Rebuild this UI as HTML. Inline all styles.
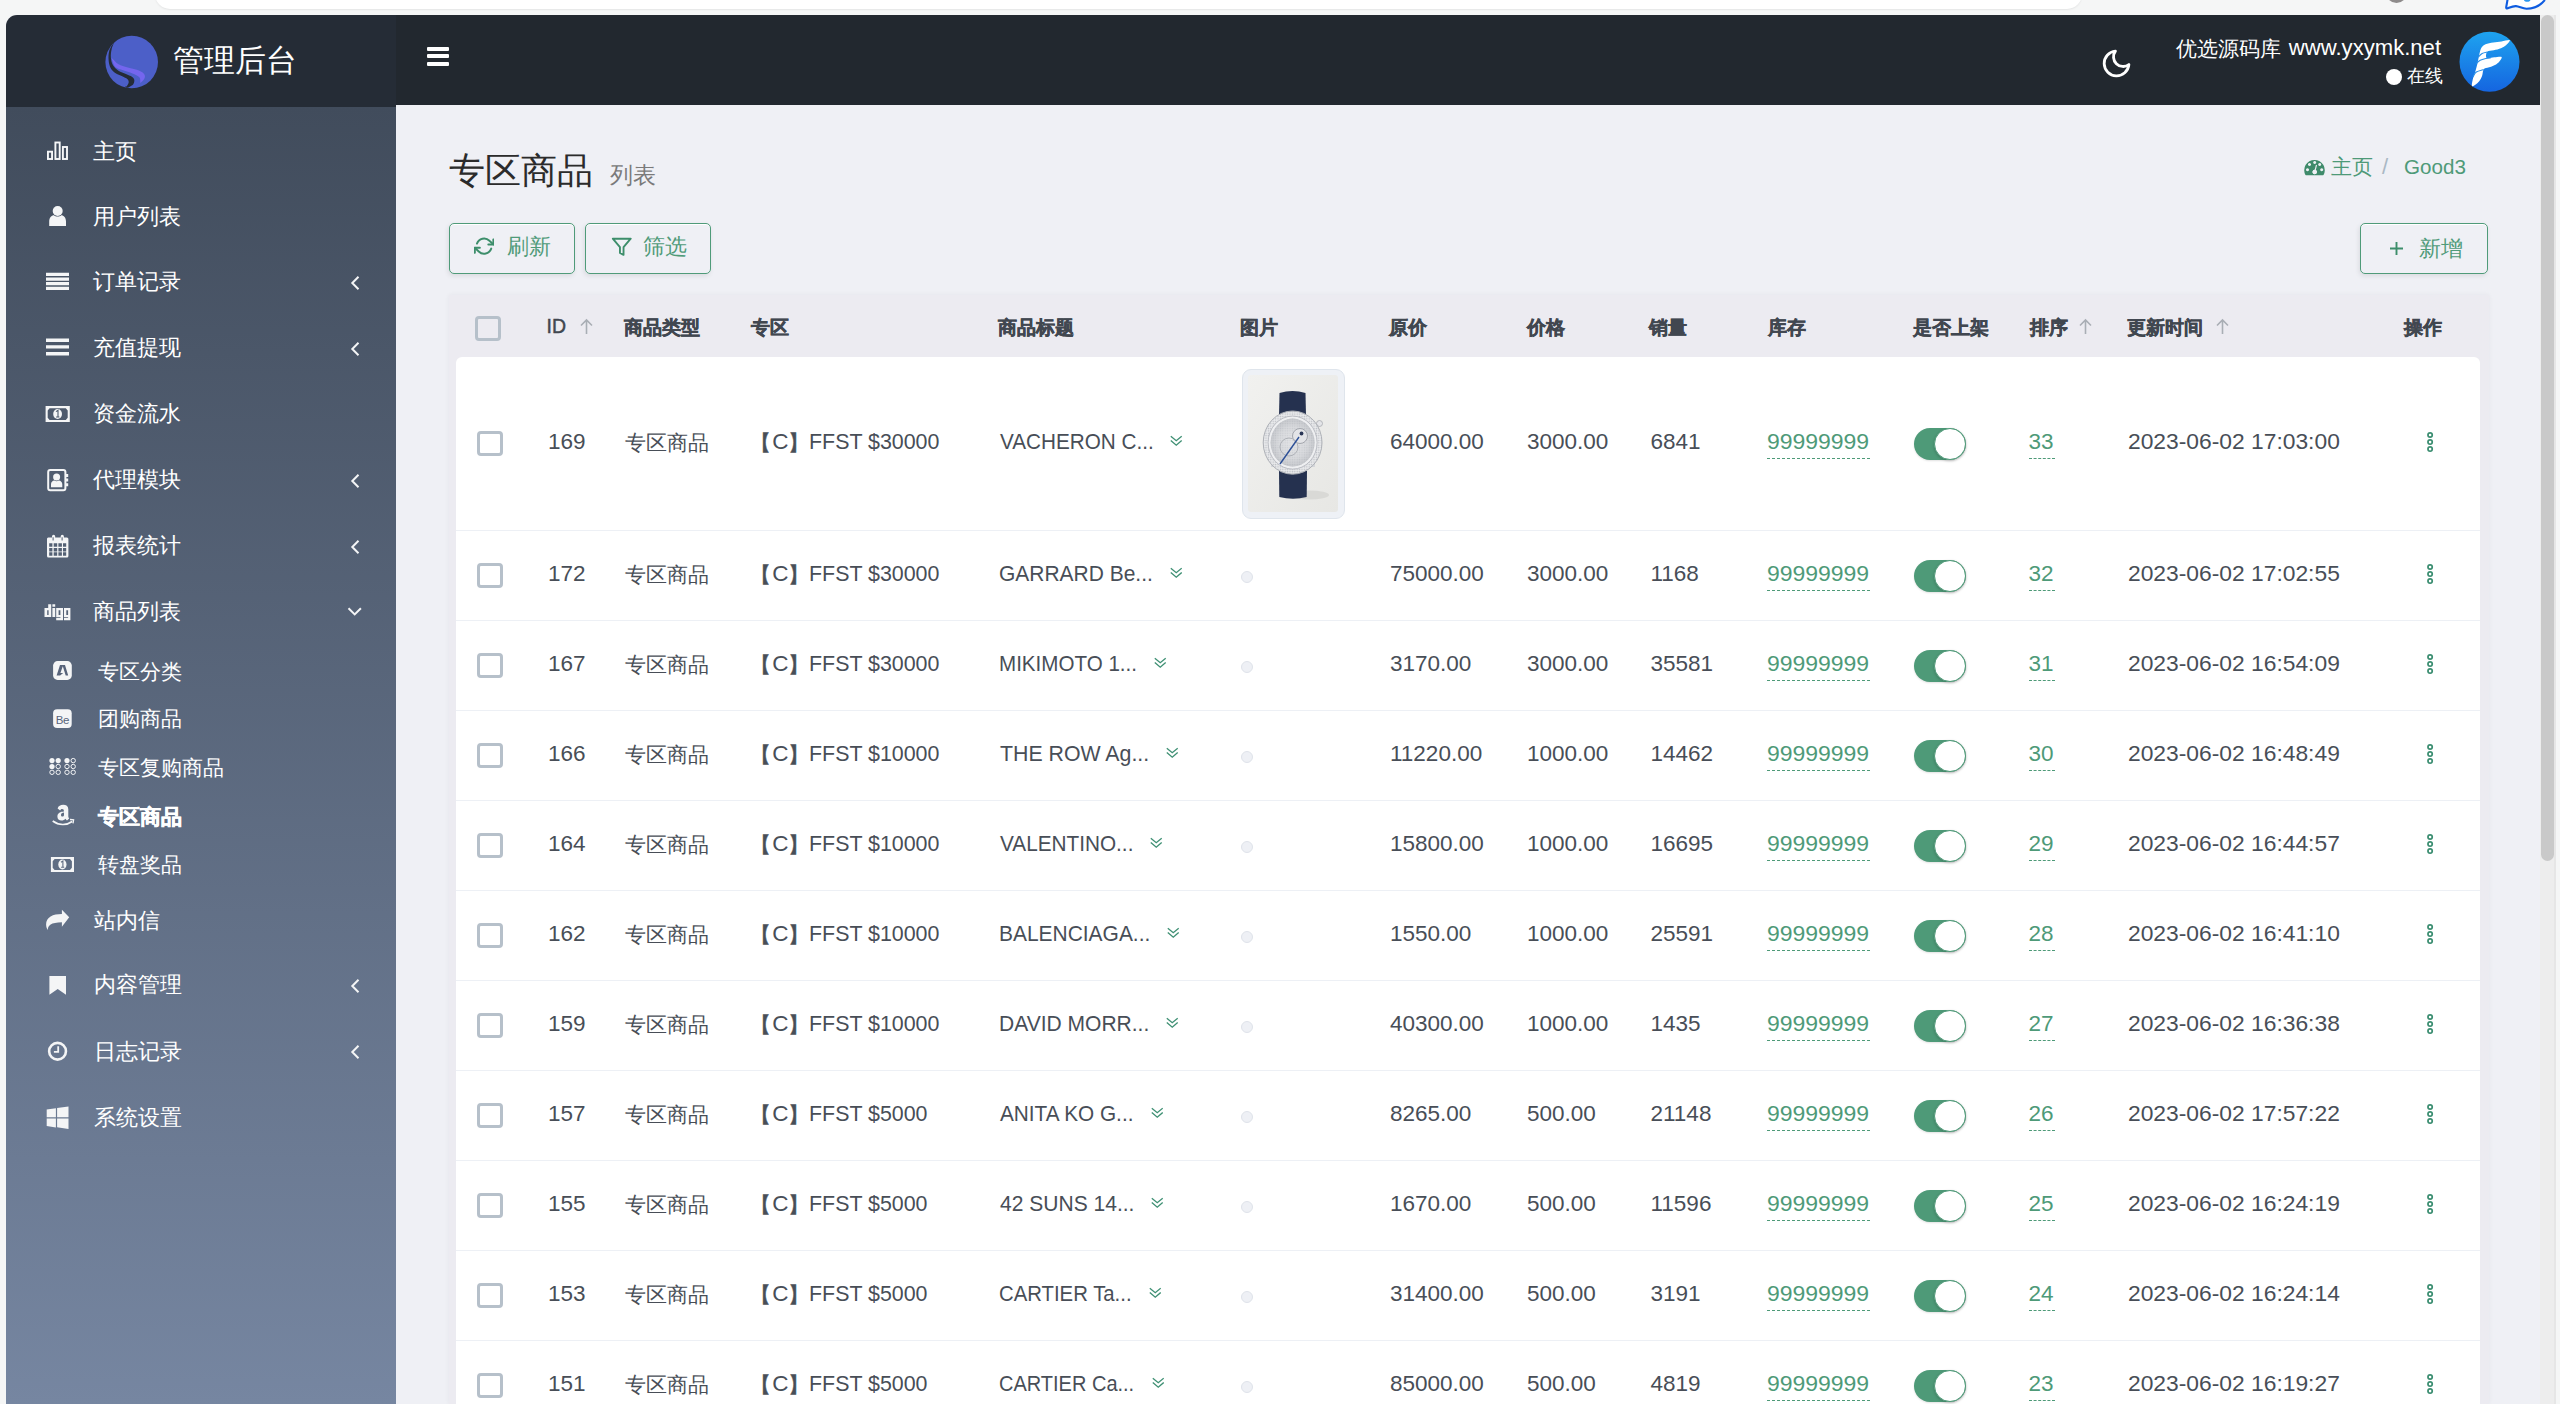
<!DOCTYPE html>
<html><head><meta charset="utf-8"><style>
*{margin:0;padding:0;box-sizing:border-box}
html,body{width:2560px;height:1404px;overflow:hidden}
body{background:#f5f6f6;font-family:"Liberation Sans",sans-serif;position:relative;color:#414750}
.abs{position:absolute}
#topbar{position:absolute;left:155px;top:-21px;width:1927px;height:30px;background:#fff;border-radius:15px;box-shadow:0 1px 2px rgba(0,0,0,.07)}
#greyc{position:absolute;left:2386px;top:-18px;width:21px;height:21px;border-radius:50%;background:#8e8b8b}
#app{position:absolute;left:6px;top:15px;width:2534px;height:1389px;border-top-left-radius:11px;overflow:hidden;background:#eff0f5}
#brand{position:absolute;left:0;top:0;width:390px;height:92px;background:#252c36}
#nav{position:absolute;left:390px;top:0;width:2144px;height:90px;background:#22282f}
#side{position:absolute;left:0;top:92px;width:390px;height:1297px;background:linear-gradient(#414c5c,#7686a1)}
#content{position:absolute;left:390px;top:90px;width:2144px;height:1299px;background:#eff0f5}
#scroll{position:absolute;left:2540px;top:15px;width:16px;height:1389px;background:#ededed;border-right:2px solid #e6e6e6}
#thumb{position:absolute;left:2541px;top:15px;width:13px;height:846px;border-radius:7px;background:#c9c9c9}
.logo{position:absolute;left:99px;top:21px;width:53px;height:53px;border-radius:50%;background:#4f5fc4;overflow:hidden}
.brandtxt{position:absolute;left:168px;top:46px;transform:translateY(-50%);color:#fff;font-size:31px;line-height:1;white-space:nowrap}
.hamb{position:absolute;left:421px;top:32px;width:22px}
.hamb i{display:block;height:4px;background:#fff;border-radius:1px;margin-bottom:3.3px}
.side-i{position:absolute;left:0;width:390px;height:40px;color:#fff}
.side-i .tx{position:absolute;left:87px;top:50%;transform:translateY(-50%);font-size:23px;line-height:1;white-space:nowrap}
.side-i.sub .tx{left:91px}
.side-i .ic{position:absolute;left:40px;top:50%;transform:translateY(-50%);width:24px;height:24px}
.side-i.sub .ic{left:44px}
.side-i .arr{position:absolute;left:345px;top:50%;transform:translateY(-50%);width:9px;height:14px}
.title{position:absolute;left:449px;top:170.5px;transform:translateY(-50%);font-size:36px;line-height:1;color:#2b2b2b;white-space:nowrap}
.subt{position:absolute;left:610px;top:175px;transform:translateY(-50%);font-size:23px;line-height:1;color:#7a7a7a;white-space:nowrap}
.btn{position:absolute;top:223px;height:51px;border:1.4px solid #4f9b79;border-radius:5px;color:#4f9b79;font-size:21.5px;box-shadow:-1px 2px 5px rgba(0,0,0,.09),inset 0 1px 0 #fff}
.btn .bt{position:absolute;top:50%;transform:translateY(-50%);line-height:1;white-space:nowrap}
.crumb{position:absolute;top:167px;transform:translateY(-50%);color:#4e9a78;font-size:22px;line-height:1;white-space:nowrap}
#thead{position:absolute;left:448.5px;top:294.6px;width:2040px;height:1109px;background:#ecebf1;box-shadow:0 0 5px rgba(40,40,60,.05)}
.th{position:absolute;top:327px;transform:translateY(-50%);font-size:19px;font-weight:bold;-webkit-text-stroke:0.45px #414750;line-height:1;color:#414750;white-space:nowrap}
.arrow{position:absolute;top:318px;width:13px;height:17px}
#tbody{position:absolute;left:456px;top:357px;width:2024px;height:1100px;background:#fff;border-radius:6px 6px 0 0}
.sep{position:absolute;left:456px;width:2024px;height:1px;background:#edf0f5}
.t{position:absolute;transform-origin:0 50%;font-size:22.5px;line-height:1;white-space:nowrap;color:#484e57}
.cj{font-size:20.5px;transform:translateY(-50%)}
.lkt{color:#4e9a78}
.ul{position:absolute;height:1px;border-top:1.2px dashed #4e9a78}
.dd{position:absolute}
.cb{position:absolute;width:25.6px;height:25.6px;border:3px solid #b6c0ca;border-radius:4px}
.dot{position:absolute;width:12px;height:12px;border-radius:50%;background:#eef0f5;border:1px solid #dfe3ea}
.img{position:absolute;left:1241.5px;top:369px;width:103px;height:150px;border:1.5px solid #dfe5ec;border-radius:9px;background:#eef1f6;padding:5px 6px}
.watch{width:90px;height:137px;background:#ececea;border-radius:3px;position:relative;overflow:hidden;color:transparent}
.tg{position:absolute;width:52px;height:32px;border-radius:16px;background:#4e9a78;box-shadow:0 1px 2px rgba(0,0,0,.12)}
.tg i{position:absolute;right:0;top:0;width:32px;height:32px;border-radius:50%;background:#fff;border:1px solid #4e9a78;box-shadow:0 1px 3px rgba(0,0,0,.2)}
.more{position:absolute}
.stx{position:absolute;transform:translateY(-50%);color:#fff;line-height:1;white-space:nowrap}
.bt{position:absolute;transform:translateY(-50%);line-height:1;white-space:nowrap;color:#4f9b79;font-size:21.5px}
.br{-webkit-text-stroke:0.5px #484e57}

</style></head><body>
<div id="topbar"></div>
<div id="greyc"></div>
<svg class="abs" style="left:2490px;top:0" width="70" height="15" viewBox="2490 0 70 15"><path d="M2508 -3 L2506.2 7.2 Q2506 8.8 2507.8 8.3 C2510.5 7.2 2513 5.9 2516 6.1 C2519.5 6.5 2522.5 8.7 2526.5 8.7 C2533.5 8.7 2540.5 5.2 2544.3 0.6 L2545 -3Z" fill="#fff" stroke="#0e5ce0" stroke-width="2.1" stroke-linejoin="round"/><ellipse cx="2527.2" cy="-0.2" rx="3.2" ry="2" fill="#2d98ef"/></svg>
<div id="app"></div>
<div class="abs" id="brand" style="left:6px;top:15px;border-top-left-radius:11px"></div>
<div class="abs" id="nav" style="left:396px;top:15px"></div>
<div class="abs" id="side" style="left:6px;top:107px"></div>
<div class="abs" id="content" style="left:396px;top:105px"></div>
<div id="scroll"></div><div id="thumb"></div>

<!-- brand -->
<svg class="abs" style="left:100px;top:30px" width="65" height="65" viewBox="100 30 65 65">
<defs><clipPath id="lc"><circle cx="131.7" cy="62.05" r="26.3"/></clipPath></defs>
<circle cx="131.7" cy="62.05" r="26.3" fill="#4c5fc8"/>
<g clip-path="url(#lc)"><path d="M112.00 59.60C112.47 60.98 113.45 65.22 115.30 67.00C117.15 68.78 120.25 69.22 123.10 70.30C125.95 71.38 129.68 72.35 132.40 73.50C135.12 74.65 138.08 75.73 139.40 77.20C140.72 78.67 140.08 81.37 140.30 82.30C140.52 83.23 140.02 83.42 140.70 82.80C141.38 82.18 143.78 80.00 144.40 78.60C145.02 77.20 145.23 75.72 144.40 74.40C143.57 73.08 142.17 71.85 139.40 70.70C136.63 69.55 131.28 68.57 127.80 67.50C124.32 66.43 121.05 65.77 118.50 64.30C115.95 62.83 113.58 59.48 112.50 58.70C111.42 57.92 111.53 58.22 112.00 59.60Z" fill="#7466ee"/><path d="M114.80 41.10C115.18 39.87 114.82 40.38 113.90 42.00C112.98 43.62 110.18 47.78 109.30 50.80C108.42 53.82 108.38 57.23 108.60 60.10C108.82 62.97 109.48 65.83 110.60 68.00C111.72 70.17 113.37 71.72 115.30 73.10C117.23 74.48 120.20 75.30 122.20 76.30C124.20 77.30 126.22 78.10 127.30 79.10C128.38 80.10 128.77 81.15 128.70 82.30C128.63 83.45 127.52 85.23 126.90 86.00C126.28 86.77 125.00 86.58 125.00 86.90C125.00 87.22 126.05 87.97 126.90 87.90C127.75 87.83 129.03 87.12 130.10 86.50C131.17 85.88 132.60 85.28 133.30 84.20C134.00 83.12 134.53 81.23 134.30 80.00C134.07 78.77 133.30 77.80 131.90 76.80C130.50 75.80 128.13 75.02 125.90 74.00C123.67 72.98 120.65 72.17 118.50 70.70C116.35 69.23 114.27 67.35 113.00 65.20C111.73 63.05 111.13 60.43 110.90 57.80C110.67 55.17 110.95 52.18 111.60 49.40C112.25 46.62 114.42 42.33 114.80 41.10Z" fill="#252c36"/></g>
</svg>
<div class="brandtxt" style="left:173px;top:60px">管理后台</div>
<div class="hamb" style="left:427px;top:47px"><i></i><i></i><i></i></div>

<!-- navbar right -->
<svg class="abs" style="left:2100.3px;top:47.3px" width="33" height="33" viewBox="0 0 24 24"><path d="M21 12.79A9 9 0 1 1 11.21 3 7 7 0 0 0 21 12.79z" fill="none" stroke="#fff" stroke-width="2.05" stroke-linecap="round" stroke-linejoin="round"/></svg>
<div class="abs" style="left:2175.5px;top:47.6px;transform:translateY(-50%);color:#fff;font-size:21px;line-height:1;white-space:nowrap">优选源码库</div>
<div class="abs" style="left:2288.8px;top:47.8px;transform:translateY(-50%);color:#fff;font-size:22.1px;line-height:1;white-space:nowrap">www.yxymk.net</div>
<div class="abs" style="left:2386.2px;top:68.6px;width:16px;height:16px;border-radius:50%;background:#fff"></div>
<div class="abs" style="left:2407px;top:76.6px;transform:translateY(-50%);color:#fff;font-size:17.5px;line-height:1;white-space:nowrap">在线</div>
<svg class="abs" style="left:2455px;top:28px" width="68" height="68" viewBox="2455 28 68 68">
<defs><linearGradient id="ag" x1="0" y1="0" x2="0" y2="1"><stop offset="0" stop-color="#1ea3ef"/><stop offset="1" stop-color="#1565e0"/></linearGradient></defs>
<circle cx="2489.5" cy="61.8" r="30" fill="url(#ag)"/>
<path d="M2471.95 86.11C2471.51 85.29 2472.11 82.24 2472.68 79.82C2473.24 77.39 2474.53 74.33 2475.34 71.58C2476.15 68.84 2476.87 66.10 2477.52 63.35C2478.16 60.61 2478.57 57.70 2479.21 55.12C2479.86 52.54 2480.34 49.67 2481.39 47.85C2482.44 46.04 2483.53 45.13 2485.51 44.22C2487.49 43.32 2490.59 42.89 2493.26 42.43C2495.92 41.97 2498.74 41.85 2501.49 41.46C2504.23 41.08 2508.91 39.51 2509.72 40.11C2510.53 40.70 2507.78 43.67 2506.33 45.05C2504.88 46.42 2503.10 47.45 2501.00 48.34C2498.91 49.23 2496.04 49.79 2493.74 50.37C2491.44 50.95 2488.37 50.55 2487.20 51.83C2486.03 53.10 2485.55 57.10 2486.72 58.02C2487.89 58.94 2491.75 57.52 2494.23 57.35C2496.70 57.17 2500.82 56.16 2501.59 56.96C2502.35 57.76 2500.29 60.63 2498.83 62.14C2497.36 63.65 2494.91 65.02 2492.77 66.01C2490.63 67.01 2487.57 67.45 2485.99 68.10C2484.42 68.74 2483.97 68.62 2483.33 69.89C2482.68 71.16 2482.80 73.80 2482.12 75.70C2481.43 77.60 2480.34 79.76 2479.21 81.27C2478.08 82.78 2476.55 83.95 2475.34 84.76C2474.13 85.56 2472.39 86.93 2471.95 86.11Z" fill="#fff"/>
<path d="M2478.24 57.06C2478.89 56.45 2480.60 54.27 2482.12 53.42C2483.64 52.58 2486.48 52.21 2487.35 51.97 M2476.31 63.59C2476.95 63.05 2478.57 61.20 2480.18 60.35C2481.80 59.50 2484.22 58.94 2485.99 58.51C2487.77 58.08 2490.03 57.90 2490.84 57.78 M2472.92 76.91C2473.48 76.10 2474.53 73.29 2476.31 72.07C2478.08 70.84 2482.36 69.97 2483.57 69.55" fill="none" stroke="#2a8fe8" stroke-width="1.1"/>
</svg>

<!-- sidebar -->
<svg class="abs" style="left:0;top:0" width="400" height="1404" viewBox="0 0 400 1404" fill="#f4f5f6">
<!-- home bar chart -->
<g fill="none" stroke="#f6f7f8" stroke-width="1.9">
<rect x="47.95" y="151.7" width="4.1" height="7.3"/>
<rect x="55.4" y="142.5" width="4.3" height="16.5"/>
<rect x="62.9" y="147" width="4.1" height="12"/>
</g>
<!-- user -->
<circle cx="57.7" cy="211" r="5"/>
<path d="M49.2 226 V221.5 C49.2 217.5 51.5 215.2 54 215.2 C55 216.2 56.3 216.6 57.6 216.6 C58.9 216.6 60.2 216.2 61.2 215.2 C63.7 215.2 66 217.5 66 221.5 V226 Z" />
<!-- align-justify 4 bars -->
<path d="M46 272.7h23v3.2H46zM46 277.5h23v3.2H46zM46 282.1h23v3.2H46zM46 286.8h23v3.2H46z"/>
<!-- bars 3 -->
<path d="M46 338.6h23v3.3H46zM46 345.3h23v3.3H46zM46 352.1h23v3.3H46z"/>
<!-- money -->
<path fill-rule="evenodd" d="M45.6 406h24.2v16H45.6z M49.6 408.3h16.2l1.9 2.3v7.1l-1.9 2.3H49.6l-1.9-2.3v-7.1z"/>
<ellipse cx="57.6" cy="414" rx="4.4" ry="5"/>
<path d="M56 411.6l2-1.3v6.4M56.1 417h3.3" stroke="#4d5a6c" stroke-width="1.1" fill="none"/>
<!-- address book -->
<rect x="48.2" y="470" width="17.2" height="20.2" rx="2" fill="none" stroke="#f4f5f6" stroke-width="2"/>
<circle cx="56.6" cy="477" r="3.5"/>
<path d="M51 487.2v-3c0-2 1.5-3.8 3.3-3.8 .7.5 1.5.8 2.3.8s1.6-.3 2.3-.8c1.8 0 3.4 1.8 3.4 3.8v3z"/>
<path d="M66 474h2.2v3H66zM66 478.6h2.2v3H66zM66 483.2h2.2v3H66z"/>
<!-- calendar -->
<path fill-rule="evenodd" d="M48.8 537.6h3.2v-1.2a1.6 1.6 0 0 1 3.2 0v1.2h5.5v-1.2a1.6 1.6 0 0 1 3.2 0v1.2h3a1.5 1.5 0 0 1 1.5 1.5V556a1.5 1.5 0 0 1-1.5 1.5H48.5A1.5 1.5 0 0 1 47 556V539.1a1.5 1.5 0 0 1 1.8-1.5z M49.2 543.2h3.2v3.5h-3.2z M53.7 543.2h3.5v3.5h-3.5z M58.4 543.2h3.5v3.5h-3.5z M63 543.2h3.2v3.5H63z M49.2 547.9h3.2v3.6h-3.2z M53.7 547.9h3.5v3.6h-3.5z M58.4 547.9h3.5v3.6h-3.5z M63 547.9h3.2v3.6H63z M49.2 552.2h3.2v3.6h-3.2z M53.7 552.2h3.5v3.6h-3.5z M58.4 552.2h3.5v3.6h-3.5z M63 552.2h3.2v3.6H63z M52.6 537.2h1v3.2h-1z M61.6 537.2h1v3.2h-1z"/>
<!-- digg -->
<path fill-rule="evenodd" d="M44.5 608h3.7v-3.8h3v12.8H44.5z M47.2 610.2h1.4v4.8h-1.4z"/>
<path d="M52.4 604.2h2.8v2.6h-2.8zM52.4 608h2.8v9h-2.8z"/>
<path fill-rule="evenodd" d="M56.2 608h6.8v12.2h-6.8v-2.4h4.3v-0.8h-4.3z M58.6 610.2h1.8v4.8h-1.8z"/>
<path fill-rule="evenodd" d="M64 608h6.4v12.2H64v-2.4h4.1v-0.8H64z M66.3 610.2h1.8v4.8h-1.8z"/>
<!-- sub A -->
<rect x="53.1" y="661.1" width="18.7" height="18.8" rx="4.5"/>
<path d="M60 665 L65 665 L68.2 675.6 L65.7 675.6 L62.8 666.2 L60.4 672.9 L63.2 673.1 L60.1 675.6 L56.6 675.6 Z" fill="#57637a"/>
<!-- sub Be -->
<rect x="53.1" y="709.3" width="18.6" height="18.6" rx="4"/>
<text x="62.4" y="723.5" text-anchor="middle" font-family="Liberation Sans" font-size="11.5" fill="#58647b" letter-spacing="-0.3">Be</text>
<!-- braille -->
<g>
<circle cx="52" cy="760.6" r="2.6"/><circle cx="58.2" cy="760.6" r="2.6"/><circle cx="52" cy="766.5" r="2.6"/><circle cx="67" cy="760.6" r="2.6"/>
</g>
<g fill="none" stroke="#f4f5f6" stroke-width="1">
<circle cx="58.2" cy="766.5" r="2.2"/><circle cx="52" cy="772.3" r="2.2"/><circle cx="58.2" cy="772.3" r="2.2"/>
<circle cx="73.2" cy="760.6" r="2.2"/><circle cx="67" cy="766.5" r="2.2"/><circle cx="73.2" cy="766.5" r="2.2"/><circle cx="67" cy="772.3" r="2.2"/><circle cx="73.2" cy="772.3" r="2.2"/>
</g>
<!-- amazon -->
<path fill-rule="evenodd" d="M57.6 808.5c.6-2.6 3-3.8 5.6-3.8 3 0 5.1 1.4 5.1 4.5v7.3c0 .9.4 1.4.9 2l-2.2 2c-.6-.5-1.1-1.1-1.5-1.7-1 1.2-2.4 1.8-4 1.8-2.6 0-4.1-1.6-4.1-4 0-3.5 3.1-4.8 6.5-5v-.8c0-1.1-.5-1.9-1.8-1.9-1 0-1.7.6-1.9 1.5z M64 812.5c-1.8.1-3 .8-3 2.4 0 1 .6 1.7 1.5 1.7 1 0 1.5-.6 1.5-1.5z"/>
<path d="M52.7 821c6 4.5 14 4.5 19.5 0.5" fill="none" stroke="#f4f5f6" stroke-width="1.6"/>
<path d="M70 819.5l3.6.3-.6 3.6" fill="none" stroke="#f4f5f6" stroke-width="1.3"/>
<!-- money2 -->
<path fill-rule="evenodd" d="M50.9 856.9h23.1v15.1H50.9z M54.6 859h15.4l1.9 2.2v6.6l-1.9 2.2H54.6l-1.9-2.2v-6.6z"/>
<ellipse cx="62.4" cy="864.5" rx="4.1" ry="4.9"/>
<path d="M61 862.2l1.9-1.2v6.1M61.1 867.3h3.1" stroke="#5f6b81" stroke-width="1.1" fill="none"/>
<!-- share -->
<path d="M69.2 917.3l-7.3-7.5v4.2c-9 0-15.8 3-15.8 10.5 0 2.5.8 4.2 1.8 5.5-.3-4.2 3-7.8 14-7.8v4.6z"/>
<!-- bookmark -->
<path d="M49.4 975.9h16.6v18.8l-8.3-5.6-8.3 5.6z"/>
<!-- clock -->
<circle cx="57.55" cy="1051.25" r="8.4" fill="none" stroke="#f4f5f6" stroke-width="2.6"/>
<path d="M58.2 1046.3v5.6h-4.3" fill="none" stroke="#f4f5f6" stroke-width="1.8"/>
<!-- windows -->
<path d="M46.7 1109.5l9.2-1.3v9h-9.2zM57.1 1108l11.4-1.6v10.8H57.1zM46.7 1118.4h9.2v9l-9.2-1.3zM57.1 1118.4h11.4v10.5l-11.4-1.6z"/>
<!-- arrows -->
<g fill="none" stroke="#f4f5f6" stroke-width="2">
<path d="M358.5 276.8l-6.2 6.2 6.2 6.2"/>
<path d="M358.5 342.8l-6.2 6.2 6.2 6.2"/>
<path d="M358.5 474.8l-6.2 6.2 6.2 6.2"/>
<path d="M358.5 540.8l-6.2 6.2 6.2 6.2"/>
<path d="M348.5 608.2l6.2 6.2 6.2-6.2"/>
<path d="M358.5 979.8l-6.2 6.2 6.2 6.2"/>
<path d="M358.5 1045.8l-6.2 6.2 6.2 6.2"/>
</g>
</svg>

<div class="stx" style="left:93px;top:152px;font-size:22.2px">主页</div>
<div class="stx" style="left:93px;top:216.6px;font-size:22.2px">用户列表</div>
<div class="stx" style="left:93px;top:282.2px;font-size:22.2px">订单记录</div>
<div class="stx" style="left:93px;top:348px;font-size:22.2px">充值提现</div>
<div class="stx" style="left:93px;top:414px;font-size:22.2px">资金流水</div>
<div class="stx" style="left:93px;top:480px;font-size:22.2px">代理模块</div>
<div class="stx" style="left:93px;top:546px;font-size:22.2px">报表统计</div>
<div class="stx" style="left:93px;top:612px;font-size:22.2px">商品列表</div>
<div class="stx" style="left:98.2px;top:672.5px;font-size:21.4px">专区分类</div>
<div class="stx" style="left:98.2px;top:720.1px;font-size:21.4px">团购商品</div>
<div class="stx" style="left:98.2px;top:768.8px;font-size:21.4px">专区复购商品</div>
<div class="stx" style="left:98.2px;top:817.5px;font-size:21.4px;font-weight:700;-webkit-text-stroke:0.6px #fff">专区商品</div>
<div class="stx" style="left:98.2px;top:866.2px;font-size:21.4px">转盘奖品</div>
<div class="stx" style="left:93.6px;top:920.7px;font-size:22.2px">站内信</div>
<div class="stx" style="left:93.6px;top:984.8px;font-size:22.2px">内容管理</div>
<div class="stx" style="left:93.6px;top:1052.4px;font-size:22.2px">日志记录</div>
<div class="stx" style="left:93.6px;top:1118px;font-size:22.2px">系统设置</div>

<!-- content header -->
<div class="title">专区商品</div>
<div class="subt">列表</div>
<svg class="abs" style="left:2300px;top:155px" width="30" height="25" viewBox="2300 155 30 25"><defs><clipPath id="tc"><rect x="2300" y="155" width="30" height="20.3"/></clipPath></defs>
<path clip-path="url(#tc)" fill-rule="evenodd" fill="#3f8b6b" d="M2314.5 159.9a10.3 10.3 0 1 1 -0.01 0z M2309.5 163a1.5 1.5 0 1 0 0.01 0z M2314.7 161a1.5 1.5 0 1 0 0.01 0z M2319.7 163a1.5 1.5 0 1 0 0.01 0z M2307.5 168.2a1.5 1.5 0 1 0 0.01 0z M2321.7 168.2a1.5 1.5 0 1 0 0.01 0z M2314.7 169.8a2.2 2.2 0 1 0 0.01 0z"/>
<path d="M2314.7 172L2316.5 165" stroke="#eff0f5" stroke-width="1.1"/><circle cx="2314.7" cy="172" r="2.2" fill="#eff0f5"/></svg>
<div class="crumb" style="left:2330.5px;font-size:21px;top:166.2px">主页</div>
<div class="crumb" style="left:2382px;color:#aab8c4">/</div>
<div class="crumb" style="left:2404px;font-size:20.6px">Good3</div>

<div class="btn" style="left:449px;width:126px"></div>
<svg class="abs" style="left:474.3px;top:235.9px" width="20.2" height="20.2" viewBox="0 0 24 24" fill="none" stroke="#3d8e6b" stroke-width="2.3" stroke-linecap="round" stroke-linejoin="round"><polyline points="23 4 23 10 17 10"/><polyline points="1 20 1 14 7 14"/><path d="M3.51 9a9 9 0 0 1 14.85-3.36L23 10M1 14l4.64 4.36A9 9 0 0 0 20.49 15"/></svg>
<div class="bt" style="left:507px;top:247.5px">刷新</div>
<div class="btn" style="left:585px;width:126px"></div>
<svg class="abs" style="left:610.6px;top:235.9px" width="21.5" height="21.5" viewBox="0 0 24 24" fill="none" stroke="#3d8e6b" stroke-width="2.1" stroke-linecap="round" stroke-linejoin="round"><polygon points="22 3 2 3 10 12.46 10 19 14 21 14 12.46 22 3"/></svg>
<div class="bt" style="left:643px;top:247.5px">筛选</div>
<div class="btn" style="left:2360px;width:128px"></div>
<svg class="abs" style="left:2389px;top:241px" width="15" height="15" viewBox="0 0 15 15"><path d="M7.5 1v13M1 7.5h13" stroke="#3d8e6b" stroke-width="1.9"/></svg>
<div class="bt" style="left:2418.5px;top:249.5px">新增</div>

<!-- table -->
<div id="thead"></div>
<div class="abs" style="left:475.3px;top:315.6px;width:25.6px;height:25.7px;border:3px solid #b6c0ca;border-radius:4px"></div>
<div class="th" style="left:546.5px;font-weight:normal;font-size:19.5px">ID</div>
<svg class="arrow" style="left:580px" viewBox="0 0 13 17"><path d="M6.5 16V2M1 7.5l5.5-5.5 5.5 5.5" fill="none" stroke="#a9aeb5" stroke-width="1.6"/></svg>
<div class="th" style="left:624px">商品类型</div>
<div class="th" style="left:751px">专区</div>
<div class="th" style="left:998px">商品标题</div>
<div class="th" style="left:1240px">图片</div>
<div class="th" style="left:1389px">原价</div>
<div class="th" style="left:1527px">价格</div>
<div class="th" style="left:1649px">销量</div>
<div class="th" style="left:1767.5px">库存</div>
<div class="th" style="left:1913px">是否上架</div>
<div class="th" style="left:2029.5px">排序</div>
<svg class="arrow" style="left:2079px" viewBox="0 0 13 17"><path d="M6.5 16V2M1 7.5l5.5-5.5 5.5 5.5" fill="none" stroke="#a9aeb5" stroke-width="1.6"/></svg>
<div class="th" style="left:2127px">更新时间</div>
<svg class="arrow" style="left:2216px" viewBox="0 0 13 17"><path d="M6.5 16V2M1 7.5l5.5-5.5 5.5 5.5" fill="none" stroke="#a9aeb5" stroke-width="1.6"/></svg>
<div class="th" style="left:2404px">操作</div>
<div id="tbody"></div>
<div class="sep" style="top:529.9px"></div>
<div class="sep" style="top:619.9px"></div>
<div class="sep" style="top:709.9px"></div>
<div class="sep" style="top:799.9px"></div>
<div class="sep" style="top:889.9px"></div>
<div class="sep" style="top:979.9px"></div>
<div class="sep" style="top:1069.9px"></div>
<div class="sep" style="top:1159.9px"></div>
<div class="sep" style="top:1249.9px"></div>
<div class="sep" style="top:1339.9px"></div>
<div class="sep" style="top:1429.9px"></div>
<div class="cb" style="left:477.3px;top:430.9px"></div>
<div class="t" style="left:548.00px;top:442.0px;transform:translateY(-50%)">169</div>
<div class="t cj" style="left:624.5px;top:442.8px">专区商品</div>
<div class="t cj br" style="left:749.5px;top:442.5px">【</div>
<div class="t" style="left:772.3px;top:442.0px;transform:translateY(-50%)">C</div>
<div class="t cj br" style="left:787.5px;top:442.5px">】</div>
<div class="t" style="left:808.80px;top:442.0px;transform:translateY(-50%) scaleX(0.9508)">FFST $30000</div>
<div class="t" style="left:999.60px;top:442.0px;transform:translateY(-50%) scaleX(0.9200)">VACHERON C...</div>
<svg class="dd" style="left:1170.2px;top:435.4px" width="12.5" height="12" viewBox="0 0 12.5 12"><path d="M0.8 1.2l5.45 4.5 5.45-4.5M0.8 5.5l5.45 4.7 5.45-4.7" fill="none" stroke="#3f9074" stroke-width="1.35"/></svg>
<div class="img"></div><svg class="abs" style="left:1248px;top:375px" width="90" height="137" viewBox="1248 375 90 137">
<defs><radialGradient id="wf" cx="0.5" cy="0.5" r="0.55"><stop offset="0" stop-color="#e2e3e6"/><stop offset="0.6" stop-color="#cfd1d5"/><stop offset="1" stop-color="#aeb1b7"/></radialGradient>
<linearGradient id="wbg" x1="0" y1="0" x2="1" y2="1"><stop offset="0" stop-color="#f1f1ef"/><stop offset="1" stop-color="#e7e7e4"/></linearGradient>
<pattern id="dm" width="2.4" height="2.4" patternUnits="userSpaceOnUse"><rect width="2.4" height="2.4" fill="#e9eaec"/><circle cx="1.2" cy="1.2" r="0.7" fill="#b9bcc2"/></pattern></defs>
<rect x="1248" y="375" width="90" height="137" rx="3" fill="url(#wbg)"/>
<ellipse cx="1309" cy="495" rx="20" ry="4.5" fill="#d9d9d6"/>
<path d="M1279.5 393 Q1292.5 389 1305.5 393 L1306 416 L1279 416 Z" fill="#25314f"/>
<path d="M1279 471 L1307 471 L1306.7 497 Q1293 500.5 1279.3 497 Z" fill="#25314f"/>
<path d="M1272 420 L1313 420 L1315 467 L1271 467 Z" fill="#d4d6da"/>
<circle cx="1319.5" cy="423.5" r="3" fill="#e4e5e8" stroke="#a8abb1" stroke-width="0.8"/>
<ellipse cx="1292.6" cy="442.6" rx="29.4" ry="31.6" fill="url(#dm)" stroke="#aeb1b7" stroke-width="1"/>
<ellipse cx="1292.6" cy="442.6" rx="24.5" ry="26.5" fill="#eeeff1" stroke="#b5b8be" stroke-width="0.9"/>
<ellipse cx="1292.6" cy="442.6" rx="22" ry="24" fill="url(#wf)"/>
<ellipse cx="1292.6" cy="442.6" rx="22" ry="24" fill="url(#dm)" opacity="0.35"/>
<circle cx="1300" cy="436" r="7.5" fill="#e3e4e7" stroke="#a3a6ad" stroke-width="1"/>
<circle cx="1289" cy="447" r="9" fill="none" stroke="#aeb1b7" stroke-width="1"/>
<circle cx="1301.5" cy="433.5" r="1.9" fill="#2a3656"/>
<path d="M1280 464 L1299 437" stroke="#2c4f96" stroke-width="1.4"/>
</svg>
<div class="t" style="left:1390.00px;top:442.0px;transform:translateY(-50%)">64000.00</div>
<div class="t" style="left:1527.00px;top:442.0px;transform:translateY(-50%)">3000.00</div>
<div class="t" style="left:1650.50px;top:442.0px;transform:translateY(-50%)">6841</div>
<div class="t lkt" style="left:1766.50px;top:442.0px;transform:translateY(-50%) scaleX(1.0202)">99999999</div>
<div class="ul" style="left:1767px;top:458.0px;width:103px"></div>
<div class="tg" style="left:1914px;top:428.0px"><i></i></div>
<div class="t lkt" style="left:2028.50px;top:442.0px;transform:translateY(-50%)">33</div>
<div class="ul" style="left:2029px;top:458.0px;width:26px"></div>
<div class="t" style="left:2128.00px;top:442.0px;transform:translateY(-50%) scaleX(1.0139)">2023-06-02 17:03:00</div>
<svg class="more" style="left:2426px;top:431.0px" width="8" height="22" viewBox="0 0 8 22"><g fill="none" stroke="#3a8d70" stroke-width="1.7"><circle cx="4.1" cy="4" r="2.15"/><circle cx="4.1" cy="11.1" r="2.15"/><circle cx="4.1" cy="18.1" r="2.15"/></g></svg>
<div class="cb" style="left:477.3px;top:562.6px"></div>
<div class="t" style="left:548.00px;top:574.0px;transform:translateY(-50%)">172</div>
<div class="t cj" style="left:624.5px;top:574.8px">专区商品</div>
<div class="t cj br" style="left:749.5px;top:574.5px">【</div>
<div class="t" style="left:772.3px;top:574.0px;transform:translateY(-50%)">C</div>
<div class="t cj br" style="left:787.5px;top:574.5px">】</div>
<div class="t" style="left:808.80px;top:574.0px;transform:translateY(-50%) scaleX(0.9508)">FFST $30000</div>
<div class="t" style="left:998.60px;top:574.0px;transform:translateY(-50%) scaleX(0.9321)">GARRARD Be...</div>
<svg class="dd" style="left:1169.5px;top:567.4px" width="12.5" height="12" viewBox="0 0 12.5 12"><path d="M0.8 1.2l5.45 4.5 5.45-4.5M0.8 5.5l5.45 4.7 5.45-4.7" fill="none" stroke="#3f9074" stroke-width="1.35"/></svg>
<div class="dot" style="left:1241px;top:570.6px"></div>
<div class="t" style="left:1390.00px;top:574.0px;transform:translateY(-50%)">75000.00</div>
<div class="t" style="left:1527.00px;top:574.0px;transform:translateY(-50%)">3000.00</div>
<div class="t" style="left:1650.50px;top:574.0px;transform:translateY(-50%)">1168</div>
<div class="t lkt" style="left:1766.50px;top:574.0px;transform:translateY(-50%) scaleX(1.0202)">99999999</div>
<div class="ul" style="left:1767px;top:590.0px;width:103px"></div>
<div class="tg" style="left:1914px;top:560.0px"><i></i></div>
<div class="t lkt" style="left:2028.50px;top:574.0px;transform:translateY(-50%)">32</div>
<div class="ul" style="left:2029px;top:590.0px;width:26px"></div>
<div class="t" style="left:2128.00px;top:574.0px;transform:translateY(-50%) scaleX(1.0139)">2023-06-02 17:02:55</div>
<svg class="more" style="left:2426px;top:563.0px" width="8" height="22" viewBox="0 0 8 22"><g fill="none" stroke="#3a8d70" stroke-width="1.7"><circle cx="4.1" cy="4" r="2.15"/><circle cx="4.1" cy="11.1" r="2.15"/><circle cx="4.1" cy="18.1" r="2.15"/></g></svg>
<div class="cb" style="left:477.3px;top:652.6px"></div>
<div class="t" style="left:548.00px;top:664.0px;transform:translateY(-50%)">167</div>
<div class="t cj" style="left:624.5px;top:664.8px">专区商品</div>
<div class="t cj br" style="left:749.5px;top:664.5px">【</div>
<div class="t" style="left:772.3px;top:664.0px;transform:translateY(-50%)">C</div>
<div class="t cj br" style="left:787.5px;top:664.5px">】</div>
<div class="t" style="left:808.80px;top:664.0px;transform:translateY(-50%) scaleX(0.9508)">FFST $30000</div>
<div class="t" style="left:998.60px;top:664.0px;transform:translateY(-50%) scaleX(0.9149)">MIKIMOTO 1...</div>
<svg class="dd" style="left:1154.1px;top:657.4px" width="12.5" height="12" viewBox="0 0 12.5 12"><path d="M0.8 1.2l5.45 4.5 5.45-4.5M0.8 5.5l5.45 4.7 5.45-4.7" fill="none" stroke="#3f9074" stroke-width="1.35"/></svg>
<div class="dot" style="left:1241px;top:660.6px"></div>
<div class="t" style="left:1390.00px;top:664.0px;transform:translateY(-50%)">3170.00</div>
<div class="t" style="left:1527.00px;top:664.0px;transform:translateY(-50%)">3000.00</div>
<div class="t" style="left:1650.50px;top:664.0px;transform:translateY(-50%)">35581</div>
<div class="t lkt" style="left:1766.50px;top:664.0px;transform:translateY(-50%) scaleX(1.0202)">99999999</div>
<div class="ul" style="left:1767px;top:680.0px;width:103px"></div>
<div class="tg" style="left:1914px;top:650.0px"><i></i></div>
<div class="t lkt" style="left:2028.50px;top:664.0px;transform:translateY(-50%)">31</div>
<div class="ul" style="left:2029px;top:680.0px;width:26px"></div>
<div class="t" style="left:2128.00px;top:664.0px;transform:translateY(-50%) scaleX(1.0139)">2023-06-02 16:54:09</div>
<svg class="more" style="left:2426px;top:653.0px" width="8" height="22" viewBox="0 0 8 22"><g fill="none" stroke="#3a8d70" stroke-width="1.7"><circle cx="4.1" cy="4" r="2.15"/><circle cx="4.1" cy="11.1" r="2.15"/><circle cx="4.1" cy="18.1" r="2.15"/></g></svg>
<div class="cb" style="left:477.3px;top:742.6px"></div>
<div class="t" style="left:548.00px;top:754.0px;transform:translateY(-50%)">166</div>
<div class="t cj" style="left:624.5px;top:754.8px">专区商品</div>
<div class="t cj br" style="left:749.5px;top:754.5px">【</div>
<div class="t" style="left:772.3px;top:754.0px;transform:translateY(-50%)">C</div>
<div class="t cj br" style="left:787.5px;top:754.5px">】</div>
<div class="t" style="left:808.80px;top:754.0px;transform:translateY(-50%) scaleX(0.9508)">FFST $10000</div>
<div class="t" style="left:999.60px;top:754.0px;transform:translateY(-50%) scaleX(0.9471)">THE ROW Ag...</div>
<svg class="dd" style="left:1166.2px;top:747.4px" width="12.5" height="12" viewBox="0 0 12.5 12"><path d="M0.8 1.2l5.45 4.5 5.45-4.5M0.8 5.5l5.45 4.7 5.45-4.7" fill="none" stroke="#3f9074" stroke-width="1.35"/></svg>
<div class="dot" style="left:1241px;top:750.6px"></div>
<div class="t" style="left:1390.00px;top:754.0px;transform:translateY(-50%)">11220.00</div>
<div class="t" style="left:1527.00px;top:754.0px;transform:translateY(-50%)">1000.00</div>
<div class="t" style="left:1650.50px;top:754.0px;transform:translateY(-50%)">14462</div>
<div class="t lkt" style="left:1766.50px;top:754.0px;transform:translateY(-50%) scaleX(1.0202)">99999999</div>
<div class="ul" style="left:1767px;top:770.0px;width:103px"></div>
<div class="tg" style="left:1914px;top:740.0px"><i></i></div>
<div class="t lkt" style="left:2028.50px;top:754.0px;transform:translateY(-50%)">30</div>
<div class="ul" style="left:2029px;top:770.0px;width:26px"></div>
<div class="t" style="left:2128.00px;top:754.0px;transform:translateY(-50%) scaleX(1.0139)">2023-06-02 16:48:49</div>
<svg class="more" style="left:2426px;top:743.0px" width="8" height="22" viewBox="0 0 8 22"><g fill="none" stroke="#3a8d70" stroke-width="1.7"><circle cx="4.1" cy="4" r="2.15"/><circle cx="4.1" cy="11.1" r="2.15"/><circle cx="4.1" cy="18.1" r="2.15"/></g></svg>
<div class="cb" style="left:477.3px;top:832.6px"></div>
<div class="t" style="left:548.00px;top:844.0px;transform:translateY(-50%)">164</div>
<div class="t cj" style="left:624.5px;top:844.8px">专区商品</div>
<div class="t cj br" style="left:749.5px;top:844.5px">【</div>
<div class="t" style="left:772.3px;top:844.0px;transform:translateY(-50%)">C</div>
<div class="t cj br" style="left:787.5px;top:844.5px">】</div>
<div class="t" style="left:808.80px;top:844.0px;transform:translateY(-50%) scaleX(0.9508)">FFST $10000</div>
<div class="t" style="left:999.60px;top:844.0px;transform:translateY(-50%) scaleX(0.9225)">VALENTINO...</div>
<svg class="dd" style="left:1150.0px;top:837.4px" width="12.5" height="12" viewBox="0 0 12.5 12"><path d="M0.8 1.2l5.45 4.5 5.45-4.5M0.8 5.5l5.45 4.7 5.45-4.7" fill="none" stroke="#3f9074" stroke-width="1.35"/></svg>
<div class="dot" style="left:1241px;top:840.6px"></div>
<div class="t" style="left:1390.00px;top:844.0px;transform:translateY(-50%)">15800.00</div>
<div class="t" style="left:1527.00px;top:844.0px;transform:translateY(-50%)">1000.00</div>
<div class="t" style="left:1650.50px;top:844.0px;transform:translateY(-50%)">16695</div>
<div class="t lkt" style="left:1766.50px;top:844.0px;transform:translateY(-50%) scaleX(1.0202)">99999999</div>
<div class="ul" style="left:1767px;top:860.0px;width:103px"></div>
<div class="tg" style="left:1914px;top:830.0px"><i></i></div>
<div class="t lkt" style="left:2028.50px;top:844.0px;transform:translateY(-50%)">29</div>
<div class="ul" style="left:2029px;top:860.0px;width:26px"></div>
<div class="t" style="left:2128.00px;top:844.0px;transform:translateY(-50%) scaleX(1.0139)">2023-06-02 16:44:57</div>
<svg class="more" style="left:2426px;top:833.0px" width="8" height="22" viewBox="0 0 8 22"><g fill="none" stroke="#3a8d70" stroke-width="1.7"><circle cx="4.1" cy="4" r="2.15"/><circle cx="4.1" cy="11.1" r="2.15"/><circle cx="4.1" cy="18.1" r="2.15"/></g></svg>
<div class="cb" style="left:477.3px;top:922.6px"></div>
<div class="t" style="left:548.00px;top:934.0px;transform:translateY(-50%)">162</div>
<div class="t cj" style="left:624.5px;top:934.8px">专区商品</div>
<div class="t cj br" style="left:749.5px;top:934.5px">【</div>
<div class="t" style="left:772.3px;top:934.0px;transform:translateY(-50%)">C</div>
<div class="t cj br" style="left:787.5px;top:934.5px">】</div>
<div class="t" style="left:808.80px;top:934.0px;transform:translateY(-50%) scaleX(0.9508)">FFST $10000</div>
<div class="t" style="left:998.60px;top:934.0px;transform:translateY(-50%) scaleX(0.9308)">BALENCIAGA...</div>
<svg class="dd" style="left:1167.0px;top:927.4px" width="12.5" height="12" viewBox="0 0 12.5 12"><path d="M0.8 1.2l5.45 4.5 5.45-4.5M0.8 5.5l5.45 4.7 5.45-4.7" fill="none" stroke="#3f9074" stroke-width="1.35"/></svg>
<div class="dot" style="left:1241px;top:930.6px"></div>
<div class="t" style="left:1390.00px;top:934.0px;transform:translateY(-50%)">1550.00</div>
<div class="t" style="left:1527.00px;top:934.0px;transform:translateY(-50%)">1000.00</div>
<div class="t" style="left:1650.50px;top:934.0px;transform:translateY(-50%)">25591</div>
<div class="t lkt" style="left:1766.50px;top:934.0px;transform:translateY(-50%) scaleX(1.0202)">99999999</div>
<div class="ul" style="left:1767px;top:950.0px;width:103px"></div>
<div class="tg" style="left:1914px;top:920.0px"><i></i></div>
<div class="t lkt" style="left:2028.50px;top:934.0px;transform:translateY(-50%)">28</div>
<div class="ul" style="left:2029px;top:950.0px;width:26px"></div>
<div class="t" style="left:2128.00px;top:934.0px;transform:translateY(-50%) scaleX(1.0139)">2023-06-02 16:41:10</div>
<svg class="more" style="left:2426px;top:923.0px" width="8" height="22" viewBox="0 0 8 22"><g fill="none" stroke="#3a8d70" stroke-width="1.7"><circle cx="4.1" cy="4" r="2.15"/><circle cx="4.1" cy="11.1" r="2.15"/><circle cx="4.1" cy="18.1" r="2.15"/></g></svg>
<div class="cb" style="left:477.3px;top:1012.6px"></div>
<div class="t" style="left:548.00px;top:1024.0px;transform:translateY(-50%)">159</div>
<div class="t cj" style="left:624.5px;top:1024.8px">专区商品</div>
<div class="t cj br" style="left:749.5px;top:1024.5px">【</div>
<div class="t" style="left:772.3px;top:1024.0px;transform:translateY(-50%)">C</div>
<div class="t cj br" style="left:787.5px;top:1024.5px">】</div>
<div class="t" style="left:808.80px;top:1024.0px;transform:translateY(-50%) scaleX(0.9508)">FFST $10000</div>
<div class="t" style="left:998.60px;top:1024.0px;transform:translateY(-50%) scaleX(0.9342)">DAVID MORR...</div>
<svg class="dd" style="left:1166.4px;top:1017.4px" width="12.5" height="12" viewBox="0 0 12.5 12"><path d="M0.8 1.2l5.45 4.5 5.45-4.5M0.8 5.5l5.45 4.7 5.45-4.7" fill="none" stroke="#3f9074" stroke-width="1.35"/></svg>
<div class="dot" style="left:1241px;top:1020.6px"></div>
<div class="t" style="left:1390.00px;top:1024.0px;transform:translateY(-50%)">40300.00</div>
<div class="t" style="left:1527.00px;top:1024.0px;transform:translateY(-50%)">1000.00</div>
<div class="t" style="left:1650.50px;top:1024.0px;transform:translateY(-50%)">1435</div>
<div class="t lkt" style="left:1766.50px;top:1024.0px;transform:translateY(-50%) scaleX(1.0202)">99999999</div>
<div class="ul" style="left:1767px;top:1040.0px;width:103px"></div>
<div class="tg" style="left:1914px;top:1010.0px"><i></i></div>
<div class="t lkt" style="left:2028.50px;top:1024.0px;transform:translateY(-50%)">27</div>
<div class="ul" style="left:2029px;top:1040.0px;width:26px"></div>
<div class="t" style="left:2128.00px;top:1024.0px;transform:translateY(-50%) scaleX(1.0139)">2023-06-02 16:36:38</div>
<svg class="more" style="left:2426px;top:1013.0px" width="8" height="22" viewBox="0 0 8 22"><g fill="none" stroke="#3a8d70" stroke-width="1.7"><circle cx="4.1" cy="4" r="2.15"/><circle cx="4.1" cy="11.1" r="2.15"/><circle cx="4.1" cy="18.1" r="2.15"/></g></svg>
<div class="cb" style="left:477.3px;top:1102.6px"></div>
<div class="t" style="left:548.00px;top:1114.0px;transform:translateY(-50%)">157</div>
<div class="t cj" style="left:624.5px;top:1114.8px">专区商品</div>
<div class="t cj br" style="left:749.5px;top:1114.5px">【</div>
<div class="t" style="left:772.3px;top:1114.0px;transform:translateY(-50%)">C</div>
<div class="t cj br" style="left:787.5px;top:1114.5px">】</div>
<div class="t" style="left:808.80px;top:1114.0px;transform:translateY(-50%) scaleX(0.9505)">FFST $5000</div>
<div class="t" style="left:999.60px;top:1114.0px;transform:translateY(-50%) scaleX(0.9226)">ANITA KO G...</div>
<svg class="dd" style="left:1150.5px;top:1107.4px" width="12.5" height="12" viewBox="0 0 12.5 12"><path d="M0.8 1.2l5.45 4.5 5.45-4.5M0.8 5.5l5.45 4.7 5.45-4.7" fill="none" stroke="#3f9074" stroke-width="1.35"/></svg>
<div class="dot" style="left:1241px;top:1110.6px"></div>
<div class="t" style="left:1390.00px;top:1114.0px;transform:translateY(-50%)">8265.00</div>
<div class="t" style="left:1527.00px;top:1114.0px;transform:translateY(-50%)">500.00</div>
<div class="t" style="left:1650.50px;top:1114.0px;transform:translateY(-50%)">21148</div>
<div class="t lkt" style="left:1766.50px;top:1114.0px;transform:translateY(-50%) scaleX(1.0202)">99999999</div>
<div class="ul" style="left:1767px;top:1130.0px;width:103px"></div>
<div class="tg" style="left:1914px;top:1100.0px"><i></i></div>
<div class="t lkt" style="left:2028.50px;top:1114.0px;transform:translateY(-50%)">26</div>
<div class="ul" style="left:2029px;top:1130.0px;width:26px"></div>
<div class="t" style="left:2128.00px;top:1114.0px;transform:translateY(-50%) scaleX(1.0139)">2023-06-02 17:57:22</div>
<svg class="more" style="left:2426px;top:1103.0px" width="8" height="22" viewBox="0 0 8 22"><g fill="none" stroke="#3a8d70" stroke-width="1.7"><circle cx="4.1" cy="4" r="2.15"/><circle cx="4.1" cy="11.1" r="2.15"/><circle cx="4.1" cy="18.1" r="2.15"/></g></svg>
<div class="cb" style="left:477.3px;top:1192.6px"></div>
<div class="t" style="left:548.00px;top:1204.0px;transform:translateY(-50%)">155</div>
<div class="t cj" style="left:624.5px;top:1204.8px">专区商品</div>
<div class="t cj br" style="left:749.5px;top:1204.5px">【</div>
<div class="t" style="left:772.3px;top:1204.0px;transform:translateY(-50%)">C</div>
<div class="t cj br" style="left:787.5px;top:1204.5px">】</div>
<div class="t" style="left:808.80px;top:1204.0px;transform:translateY(-50%) scaleX(0.9505)">FFST $5000</div>
<div class="t" style="left:999.60px;top:1204.0px;transform:translateY(-50%) scaleX(0.9348)">42 SUNS 14...</div>
<svg class="dd" style="left:1151.2px;top:1197.4px" width="12.5" height="12" viewBox="0 0 12.5 12"><path d="M0.8 1.2l5.45 4.5 5.45-4.5M0.8 5.5l5.45 4.7 5.45-4.7" fill="none" stroke="#3f9074" stroke-width="1.35"/></svg>
<div class="dot" style="left:1241px;top:1200.6px"></div>
<div class="t" style="left:1390.00px;top:1204.0px;transform:translateY(-50%)">1670.00</div>
<div class="t" style="left:1527.00px;top:1204.0px;transform:translateY(-50%)">500.00</div>
<div class="t" style="left:1650.50px;top:1204.0px;transform:translateY(-50%)">11596</div>
<div class="t lkt" style="left:1766.50px;top:1204.0px;transform:translateY(-50%) scaleX(1.0202)">99999999</div>
<div class="ul" style="left:1767px;top:1220.0px;width:103px"></div>
<div class="tg" style="left:1914px;top:1190.0px"><i></i></div>
<div class="t lkt" style="left:2028.50px;top:1204.0px;transform:translateY(-50%)">25</div>
<div class="ul" style="left:2029px;top:1220.0px;width:26px"></div>
<div class="t" style="left:2128.00px;top:1204.0px;transform:translateY(-50%) scaleX(1.0139)">2023-06-02 16:24:19</div>
<svg class="more" style="left:2426px;top:1193.0px" width="8" height="22" viewBox="0 0 8 22"><g fill="none" stroke="#3a8d70" stroke-width="1.7"><circle cx="4.1" cy="4" r="2.15"/><circle cx="4.1" cy="11.1" r="2.15"/><circle cx="4.1" cy="18.1" r="2.15"/></g></svg>
<div class="cb" style="left:477.3px;top:1282.6px"></div>
<div class="t" style="left:548.00px;top:1294.0px;transform:translateY(-50%)">153</div>
<div class="t cj" style="left:624.5px;top:1294.8px">专区商品</div>
<div class="t cj br" style="left:749.5px;top:1294.5px">【</div>
<div class="t" style="left:772.3px;top:1294.0px;transform:translateY(-50%)">C</div>
<div class="t cj br" style="left:787.5px;top:1294.5px">】</div>
<div class="t" style="left:808.80px;top:1294.0px;transform:translateY(-50%) scaleX(0.9505)">FFST $5000</div>
<div class="t" style="left:998.60px;top:1294.0px;transform:translateY(-50%) scaleX(0.9035)">CARTIER Ta...</div>
<svg class="dd" style="left:1148.8px;top:1287.4px" width="12.5" height="12" viewBox="0 0 12.5 12"><path d="M0.8 1.2l5.45 4.5 5.45-4.5M0.8 5.5l5.45 4.7 5.45-4.7" fill="none" stroke="#3f9074" stroke-width="1.35"/></svg>
<div class="dot" style="left:1241px;top:1290.6px"></div>
<div class="t" style="left:1390.00px;top:1294.0px;transform:translateY(-50%)">31400.00</div>
<div class="t" style="left:1527.00px;top:1294.0px;transform:translateY(-50%)">500.00</div>
<div class="t" style="left:1650.50px;top:1294.0px;transform:translateY(-50%)">3191</div>
<div class="t lkt" style="left:1766.50px;top:1294.0px;transform:translateY(-50%) scaleX(1.0202)">99999999</div>
<div class="ul" style="left:1767px;top:1310.0px;width:103px"></div>
<div class="tg" style="left:1914px;top:1280.0px"><i></i></div>
<div class="t lkt" style="left:2028.50px;top:1294.0px;transform:translateY(-50%)">24</div>
<div class="ul" style="left:2029px;top:1310.0px;width:26px"></div>
<div class="t" style="left:2128.00px;top:1294.0px;transform:translateY(-50%) scaleX(1.0139)">2023-06-02 16:24:14</div>
<svg class="more" style="left:2426px;top:1283.0px" width="8" height="22" viewBox="0 0 8 22"><g fill="none" stroke="#3a8d70" stroke-width="1.7"><circle cx="4.1" cy="4" r="2.15"/><circle cx="4.1" cy="11.1" r="2.15"/><circle cx="4.1" cy="18.1" r="2.15"/></g></svg>
<div class="cb" style="left:477.3px;top:1372.6px"></div>
<div class="t" style="left:548.00px;top:1384.0px;transform:translateY(-50%)">151</div>
<div class="t cj" style="left:624.5px;top:1384.8px">专区商品</div>
<div class="t cj br" style="left:749.5px;top:1384.5px">【</div>
<div class="t" style="left:772.3px;top:1384.0px;transform:translateY(-50%)">C</div>
<div class="t cj br" style="left:787.5px;top:1384.5px">】</div>
<div class="t" style="left:808.80px;top:1384.0px;transform:translateY(-50%) scaleX(0.9505)">FFST $5000</div>
<div class="t" style="left:998.60px;top:1384.0px;transform:translateY(-50%) scaleX(0.8886)">CARTIER Ca...</div>
<svg class="dd" style="left:1151.6px;top:1377.4px" width="12.5" height="12" viewBox="0 0 12.5 12"><path d="M0.8 1.2l5.45 4.5 5.45-4.5M0.8 5.5l5.45 4.7 5.45-4.7" fill="none" stroke="#3f9074" stroke-width="1.35"/></svg>
<div class="dot" style="left:1241px;top:1380.6px"></div>
<div class="t" style="left:1390.00px;top:1384.0px;transform:translateY(-50%)">85000.00</div>
<div class="t" style="left:1527.00px;top:1384.0px;transform:translateY(-50%)">500.00</div>
<div class="t" style="left:1650.50px;top:1384.0px;transform:translateY(-50%)">4819</div>
<div class="t lkt" style="left:1766.50px;top:1384.0px;transform:translateY(-50%) scaleX(1.0202)">99999999</div>
<div class="ul" style="left:1767px;top:1400.0px;width:103px"></div>
<div class="tg" style="left:1914px;top:1370.0px"><i></i></div>
<div class="t lkt" style="left:2028.50px;top:1384.0px;transform:translateY(-50%)">23</div>
<div class="ul" style="left:2029px;top:1400.0px;width:26px"></div>
<div class="t" style="left:2128.00px;top:1384.0px;transform:translateY(-50%) scaleX(1.0139)">2023-06-02 16:19:27</div>
<svg class="more" style="left:2426px;top:1373.0px" width="8" height="22" viewBox="0 0 8 22"><g fill="none" stroke="#3a8d70" stroke-width="1.7"><circle cx="4.1" cy="4" r="2.15"/><circle cx="4.1" cy="11.1" r="2.15"/><circle cx="4.1" cy="18.1" r="2.15"/></g></svg>

</body></html>
